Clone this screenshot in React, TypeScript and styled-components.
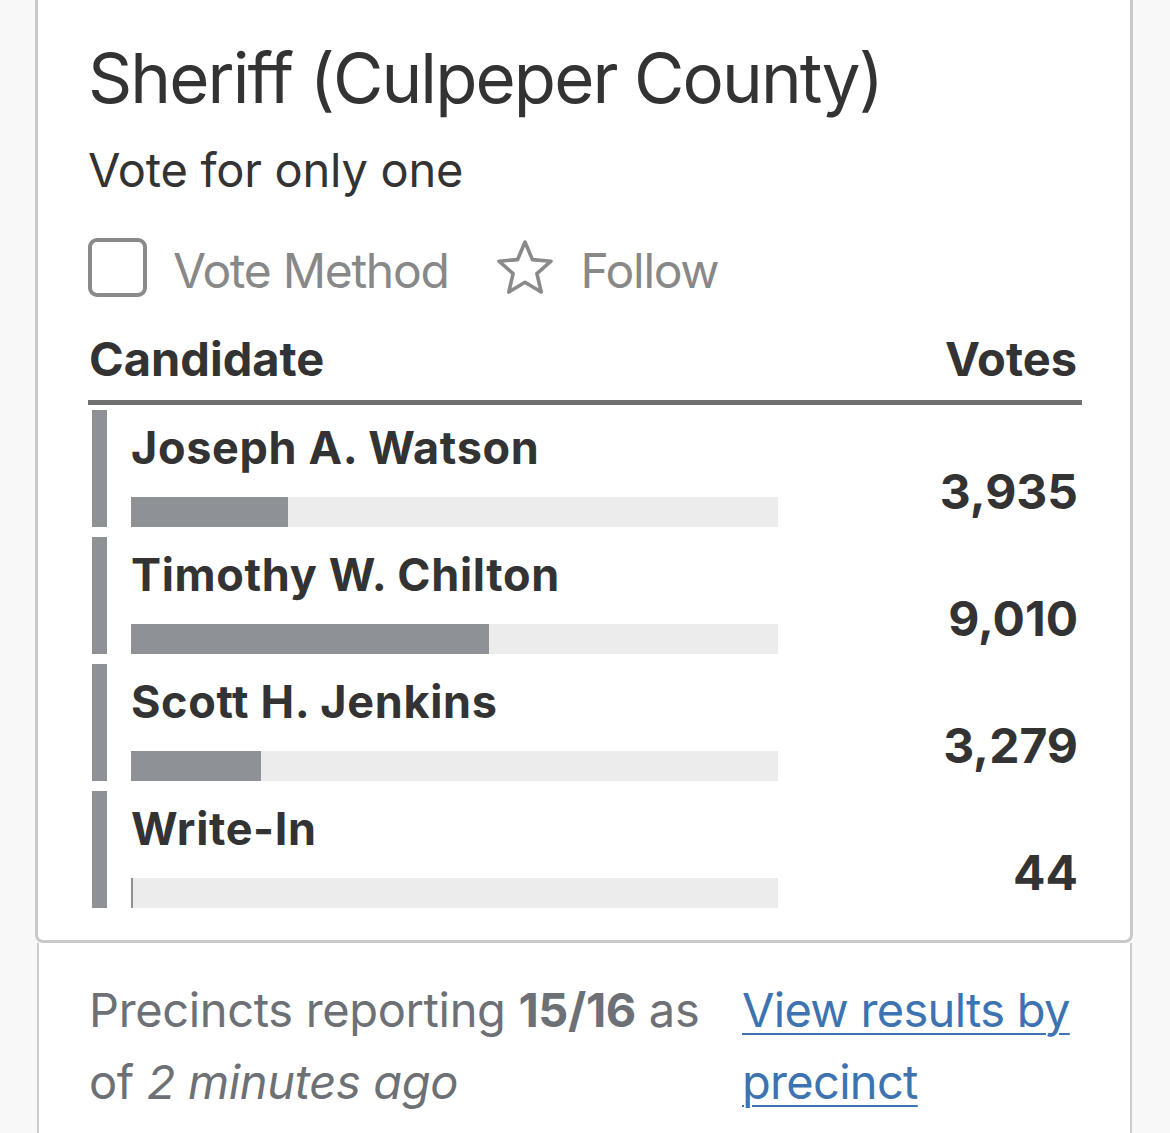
import React from "react";
import styled, { createGlobalStyle } from "styled-components";

const GlobalStyle = createGlobalStyle`
  html, body { margin: 0; padding: 0; }
  body {
    background: #f8f8f8;
    font-family: Inter, "Noto Sans", "Liberation Sans", sans-serif;
    color: #333333;
  }
`;

const Page = styled.div`
  padding-left: 35px;
  width: 1098px;
`;

const Card = styled.section`
  background: #ffffff;
  border: 3px solid #c9c9c9;
  border-top: none;
  border-radius: 0 0 8px 8px;
  padding: 36px 48px 32px 50px;
`;

const Title = styled.h1`
  margin: 0;
  font-size: 69px;
  line-height: 84px;
  font-weight: 400;
  letter-spacing: -1.9px;
  color: #333333;
`;

const Subtitle = styled.p`
  margin: 20px 0 0;
  font-size: 47px;
  line-height: 60px;
  letter-spacing: -0.25px;
  color: #333333;
`;

const Tools = styled.div`
  margin-top: 38px;
  display: flex;
  align-items: center;
  height: 59px;
`;

const Tool = styled.div<{ $gap: number }>`
  display: flex;
  align-items: center;
  gap: ${(p) => p.$gap}px;
  margin-right: 47px;
`;

const Checkbox = styled.span`
  box-sizing: border-box;
  width: 59px;
  height: 59px;
  border: 4px solid #8a8a8a;
  border-radius: 9px;
`;

const ToolLabel = styled.span`
  font-size: 48px;
  line-height: 59px;
  padding-top: 5px;
  letter-spacing: -1.3px;
  color: #888888;
`;

const Header = styled.div`
  margin-top: 32px;
  display: flex;
  justify-content: space-between;
  padding: 0 5px 11px 1px;
  border-bottom: 5px solid #707070;
  font-size: 47px;
  line-height: 60px;
  font-weight: 700;
  color: #333333;
`;

const Rows = styled.div`
  margin-top: 5px;
  display: flex;
  flex-direction: column;
  gap: 10px;
`;

const Row = styled.div`
  display: flex;
  height: 117px;
  padding-left: 4px;
`;

const Marker = styled.span`
  width: 15px;
  background: #8e9196;
  flex-shrink: 0;
`;

const Info = styled.div`
  margin-left: 24px;
  width: 647px;
  display: flex;
  flex-direction: column;
  justify-content: space-between;
`;

const Name = styled.div`
  padding-top: 10px;
  font-size: 45px;
  line-height: 56px;
  font-weight: 700;
  letter-spacing: 0.65px;
  color: #333333;
`;

const Track = styled.div`
  height: 30px;
  background: #ececec;
`;

const Fill = styled.div`
  height: 100%;
  background: #8e9196;
`;

const Votes = styled.div`
  flex: 1;
  text-align: right;
  padding: 53px 4px 0 0;
  font-size: 48px;
  line-height: 58px;
  font-weight: 700;
  color: #333333;
`;

const Footer = styled.footer`
  background: #ffffff;
  border-left: 2px solid #cbcbcb;
  border-right: 2px solid #cbcbcb;
  margin: 0 1px 0 2px;
  padding: 31px 48px 40px 50px;
  display: grid;
  grid-template-columns: 625px 1fr;
  column-gap: 28px;
  font-size: 47px;
  line-height: 72px;
`;

const Status = styled.p`
  margin: 0;
  color: #6d7075;
  letter-spacing: -0.35px;
  b { font-weight: 700; }
  i { font-style: italic; }
`;

const LinkCell = styled.div``;

const Link = styled.a`
  color: #3d73b1;
  letter-spacing: -0.7px;
  text-decoration: underline;
  text-decoration-thickness: 2px;
  text-underline-offset: 6px;
`;

const StarIcon = () => (
  <svg width="60" height="58" viewBox="0 0 60 58" fill="none">
    <path
      d="M30 3 L37.4 20.6 L56 22.2 L41.9 34.6 L46.2 53 L30 43.2 L13.8 53 L18.1 34.6 L4 22.2 L22.6 20.6 Z"
      stroke="#8a8a8a"
      strokeWidth="3.6"
      strokeLinejoin="round"
    />
  </svg>
);

const candidates = [
  { name: "Joseph A. Watson", votes: 3935 },
  { name: "Timothy W. Chilton", votes: 9010 },
  { name: "Scott H. Jenkins", votes: 3279 },
  { name: "Write-In", votes: 44 },
];

const total = candidates.reduce((s, c) => s + c.votes, 0);

export default function App() {
  return (
    <Page>
      <GlobalStyle />
      <Card>
        <Title>Sheriff (Culpeper County)</Title>
        <Subtitle>Vote for only one</Subtitle>
        <Tools>
          <Tool $gap={26}>
            <Checkbox />
            <ToolLabel>Vote Method</ToolLabel>
          </Tool>
          <Tool $gap={25}>
            <StarIcon />
            <ToolLabel>Follow</ToolLabel>
          </Tool>
        </Tools>
        <Header>
          <span>Candidate</span>
          <span>Votes</span>
        </Header>
        <Rows>
          {candidates.map((c) => (
            <Row key={c.name}>
              <Marker />
              <Info>
                <Name>{c.name}</Name>
                <Track>
                  <Fill style={{ width: `${Math.max((c.votes / total) * 100, 0.3)}%` }} />
                </Track>
              </Info>
              <Votes>{c.votes.toLocaleString("en-US")}</Votes>
            </Row>
          ))}
        </Rows>
      </Card>
      <Footer>
        <Status>
          Precincts reporting <b>15/16</b> as of <i>2 minutes ago</i>
        </Status>
        <LinkCell>
          <Link href="#">View results by precinct</Link>
        </LinkCell>
      </Footer>
    </Page>
  );
}
